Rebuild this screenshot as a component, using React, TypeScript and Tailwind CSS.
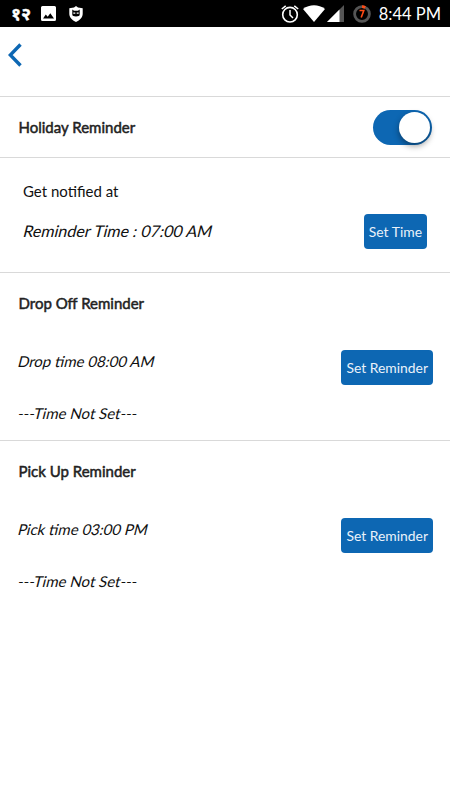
type ReminderProps = {
  title: string;
  time: string;
};

function StatusBar() {
  return (
    <div className="h-[27px] bg-black text-white flex items-center justify-between pl-[11px] pr-[9px]">
      <div className="flex items-center">
        <span className="w-[30px] text-[18px] leading-[25px] font-bold [-webkit-text-stroke:0.4px_#fff]">१२</span>
        <svg className="w-[15px] h-[15px]" viewBox="0 0 15 15">
          <path fill="#fff" fillRule="evenodd" d="M1.5 0h12A1.5 1.5 0 0 1 15 1.5v12a1.5 1.5 0 0 1-1.5 1.5h-12A1.5 1.5 0 0 1 0 13.5v-12A1.5 1.5 0 0 1 1.5 0zM2 12.500h11L9.300 7.200 6.700 10.700 4.800 8.600z" />
        </svg>
        <svg className="w-[14px] h-[16px] ml-[13px]" viewBox="0 0 14 16">
          <path fill="#fff" d="M7 0l2 1.500 4.700.7v5.300c0 3.800-2.700 6.700-6.700 8.500C3 14.200.3 11.300.3 7.500V2.200L5 1.500z" />
          <path fill="#000" d="M3.300 3.500l1.700 1.300h4l1.700-1.300v5.300c0 .9-1.400 1.600-3.700 1.600s-3.700-.7-3.700-1.600z" />
          <path fill="#fff" d="M4.300 6.500h2v1.200h-2zM7.700 6.500h2v1.200h-2z" />
        </svg>
      </div>
      <div className="flex items-center">
        <svg className="w-[18px] h-[18px]" viewBox="0 0 18 18" fill="none" stroke="#fff">
          <circle cx="9" cy="9.700" r="7.300" strokeWidth="1.600" />
          <path strokeWidth="1.500" d="M9 5v5l3 3M.8 4L4.700.8M17.200 4L13.300.8" />
        </svg>
        <svg className="w-[22px] h-[17px] ml-[4px]" viewBox="0 0 22 17">
          <path fill="#fff" d="M0 4C6.500-.9 15.500-.9 22 4L11 17z" />
        </svg>
        <svg className="w-[17px] h-[17px] ml-[2px]" viewBox="0 0 17 17">
          <path fill="#555" d="M17 0v17H0z" />
          <path fill="#fff" d="M12.500 4.500V17H0z" />
        </svg>
        <svg className="w-[18px] h-[18px] ml-[9px]" viewBox="0 0 18 18" fill="none">
          <circle cx="9" cy="9" r="7.400" stroke="#555" strokeWidth="2.800" />
          <path stroke="#ff4a14" strokeWidth="2.800" d="M9 1.600a7.400 7.400 0 0 1 3.200.8" />
          <path stroke="#ff4a14" strokeWidth="1.600" d="M6.500 5.500h4.300L8.200 12.500" />
        </svg>
        <span className="ml-[8px] text-[16.500px] leading-[27px] pt-[2px]">8:44 PM</span>
      </div>
    </div>
  );
}

function Title({ children }: { children: string }) {
  return (
    <h2 className="pl-[0.5px] text-[15px] leading-5 text-[#222] [-webkit-text-stroke:0.5px_#222]">{children}</h2>
  );
}

function Button({ children }: { children: string }) {
  return (
    <button className="h-[35px] px-[5px] rounded-[4px] bg-[#0d67b3] text-[#eaf2fa] text-[13.900px] leading-5 whitespace-nowrap">
      {children}
    </button>
  );
}

function Reminder({ title, time }: ReminderProps) {
  return (
    <section className="h-[168px] border-t border-[#d9d9d9] pl-[18px] pr-[17px] pt-[20px]">
      <Title>{title}</Title>
      <div className="flex items-start justify-between pt-[37px]">
        <div className="text-[15px] leading-5 text-[#111]">
          <p className="pt-px pl-[0.5px] -skew-x-14">{time}</p>
          <p className="mt-[32px] pl-[0.5px] -skew-x-14">---Time Not Set---</p>
        </div>
        <Button>Set Reminder</Button>
      </div>
    </section>
  );
}

export default function App() {
  return (
    <div className="w-[450px] h-[800px] bg-white overflow-hidden font-['Lato','Noto_Sans',sans-serif]">
      <StatusBar />

      {/* Header */}
      <header className="h-[69px] pl-[8px] pt-[16px]">
        <svg className="w-[14px] h-[24px]" viewBox="0 0 14 24" fill="none">
          <path stroke="#0d67b3" strokeWidth="3.400" d="M12.500 1.500L2.300 12l10.200 10.500" />
        </svg>
      </header>

      {/* Holiday reminder */}
      <section className="h-[61px] border-t border-[#d9d9d9] flex items-center justify-between pl-[18px] pr-[18px]">
        <Title>Holiday Reminder</Title>
        <div className="w-[59px] h-[35px] rounded-full bg-[#0d67b3] p-[2px] flex justify-end">
          <div className="size-[31px] rounded-full bg-white shadow-[0_3px_6px_rgba(0,0,0,0.4)]" />
        </div>
      </section>
      <section className="h-[115px] border-t border-[#d9d9d9] pl-[23px] pr-[23px] pt-[23px]">
        <p className="text-[15px] leading-5 text-[#111]">Get notified at</p>
        <div className="flex items-start justify-between pt-[13px]">
          <p className="text-[16.100px] leading-5 text-[#111] pt-[7px] pl-[1.500px] -skew-x-14">Reminder Time : 07:00 AM</p>
          <Button>Set Time</Button>
        </div>
      </section>

      <Reminder title="Drop Off Reminder" time="Drop time 08:00 AM" />
      <Reminder title="Pick Up Reminder" time="Pick time 03:00 PM" />
    </div>
  );
}
